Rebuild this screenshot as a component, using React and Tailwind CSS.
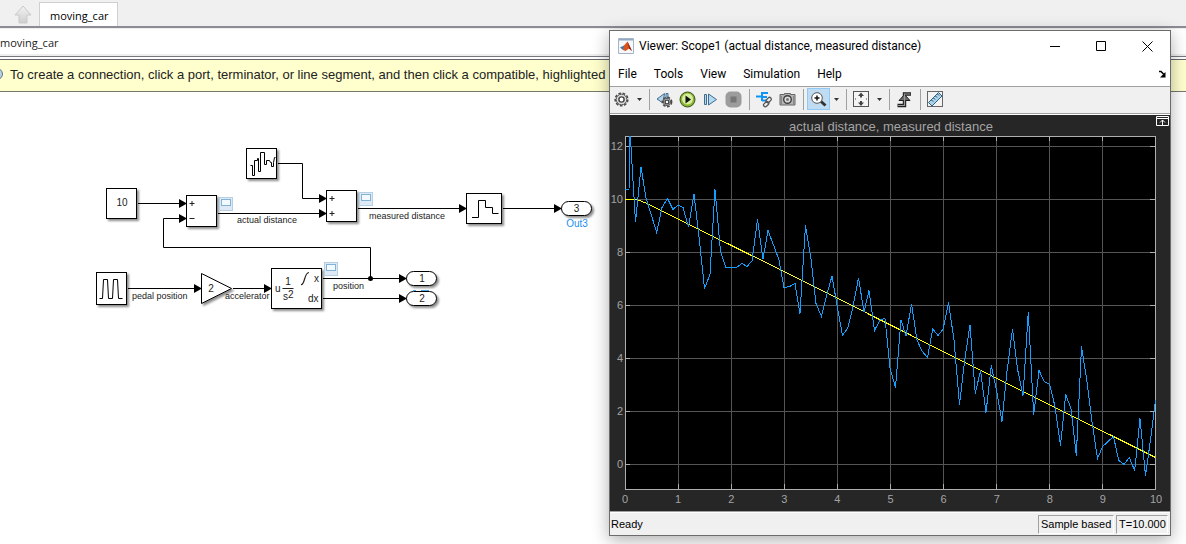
import React from "react";

const UI = "font-['Open_Sans','Noto_Sans',sans-serif]";
const WINDOW = "font-[Roboto,'Open_Sans',sans-serif]";
const ARIAL = "font-['Liberation_Sans',Arial,sans-serif]";

const noise = [
  [625, 189], [629, 189], [630, 130], [635.5, 222], [641, 167], [646, 198], [651, 214], [656.7, 232.5], [662, 207.5],
  [667.5, 198.5], [673, 209.5], [678, 205], [683, 207.5], [688.5, 227], [694, 194], [699, 236.5], [704.5, 288.5],
  [710, 274.5], [715, 189.5], [720.5, 251.5], [726, 268], [731, 267.5], [736.5, 267.5], [742, 263.5], [747, 266.5],
  [752, 261], [757.5, 219.5], [763, 259], [768, 230.5], [773.5, 245], [779, 260], [784, 287.5], [789.5, 286.5],
  [795, 283.5], [800, 313.5], [805.5, 225.5], [811, 259], [816, 303.5], [821.5, 316.5], [826.7, 295], [832, 276],
  [837, 305], [842.5, 335.5], [848, 327.5], [853, 306.5], [858.5, 278], [864, 312], [869, 290.5], [874.5, 330.5],
  [880, 320], [885, 318.5], [890, 368], [895.5, 387.5], [901, 320], [906, 336], [911.5, 304], [917, 340], [922, 351],
  [927.5, 357.5], [932.7, 329], [938, 335.5], [943, 329.5], [948.5, 302.5], [954, 340], [959.5, 404.5], [964.7, 360],
  [970, 325], [975.3, 393.5], [980.5, 370.5], [986, 412.5], [991.3, 365.5], [996.7, 391.5], [1002, 421.5],
  [1007, 371.5], [1012.5, 329], [1017.7, 370], [1023, 395.5], [1028.3, 312], [1033.7, 414.5], [1039, 370.5],
  [1044.3, 381.5], [1049.7, 384.5], [1055, 406.5], [1060.5, 445.5], [1065.7, 394.5], [1071, 408.5], [1076.3, 455.5],
  [1081.5, 346.5], [1087, 381.5], [1092, 421.5], [1097.5, 458.5], [1102.7, 446.5], [1108, 441.5], [1113.5, 436.5],
  [1118.7, 460.5], [1124, 464.5], [1129.3, 457.5], [1134.7, 470.5], [1140, 418.5], [1145.5, 475.5], [1150.5, 440],
  [1155.5, 400],
];
const distance = "625,199.5 635,199.5 641,201 648,204 678,219 799,279 980,370 1155.5,457.5";

function ScopeBadge({ x, y }) {
  return (
    <g>
      <rect x={x + 0.5} y={y + 0.5} width="13" height="13" fill="#dde9f4" stroke="#b6cfe2" />
      <rect x={x + 2.5} y={y + 2.5} width="9" height="6" fill="#f2f9ff" stroke="#82b2d6" />
    </g>
  );
}

function Box({ x, y, w, h, rx = 0 }) {
  return <rect x={x} y={y} width={w} height={h} rx={rx} fill="#fff" stroke="#000" filter="url(#blockShadow)" />;
}

function Arrow({ x, y }) {
  return <path d={`M${x} ${y}l-8-4.500v9z`} fill="#000" />;
}

function Model() {
  return (
    <svg className={`block h-[452px] w-[609px] ${ARIAL}`} viewBox="0 92 609 452" role="img" aria-label="moving_car model">
      <defs>
        <filter id="blockShadow" x="-20%" y="-30%" width="150%" height="170%">
          <feDropShadow dx="2" dy="2" stdDeviation="1.2" floodColor="#000" floodOpacity="0.45" />
        </filter>
      </defs>
      <Box x={106.5} y={188.5} w={30} h={30} />
      <Box x={186.5} y={195.5} w={30} h={31} />
      <Box x={246.5} y={148.5} w={30} h={30} />
      <Box x={326.5} y={190.5} w={30} h={31} />
      <Box x={466.5} y={193.5} w={35} h={30} />
      <Box x={561.5} y={201.5} w={30} h={14} rx={7} />
      <Box x={96.5} y={272.5} w={30} h={32} />
      <Box x={271.5} y={268.5} w={50} h={40} />
      <Box x={406.5} y={271.5} w={30} h={14} rx={7} />
      <Box x={406.5} y={291.5} w={30} h={14} rx={7} />
      <path d="M201.5 273.5L231.5 288.5L201.5 303.5z" fill="#fff" stroke="#000" filter="url(#blockShadow)" />
      <g fill="none" stroke="#000">
        <path d="M138 203.5H180M218 213.5H320M278 163.5H302.5V198.5H320M358 208.5H460M503 208.5H555" />
        <path d="M180 218.5H163.5V247.5H370.5V278.5M128 288.5H195M233 288.5H265M323 278.5H400M323 298.5H400" />
        <path d="M250.5 165.5h2v10h2v-15h3v-2h1v13h2v-19h4v12h2v-4h3l1 2h1v4h2v-4l1-5h1" />
        <path d="M472 217.5h6.5v-17h7v7h7v6h6" />
        <path d="M99.5 298.5h3l1-19h4l1 19h4l1-19h4l1 19h4" />
      </g>
      <Arrow x={187} y={203.5} />
      <Arrow x={187} y={218.5} />
      <Arrow x={327} y={198.5} />
      <Arrow x={327} y={213.5} />
      <Arrow x={467} y={208.5} />
      <Arrow x={562} y={208.5} />
      <Arrow x={202} y={288.5} />
      <Arrow x={272} y={288.5} />
      <Arrow x={407} y={278.5} />
      <Arrow x={407} y={298.5} />
      <circle cx="370.5" cy="278.5" r="2.5" />
      <ScopeBadge x={219} y={197} />
      <ScopeBadge x={359} y={192} />
      <ScopeBadge x={324} y={262} />
      <path d="M189.5 203.5h5M192 201v5M189.5 218.5h5M329.5 198.5h5M332 196v5M329.5 213.5h5M332 211v5M282.5 288.5h11" stroke="#222" />
      <path d="M301 284.5c4 1 3-12 8-12" stroke="#222" fill="none" strokeWidth="1.2" />
      <path d="M413 290.5h3M421 290.5h8" stroke="#4aa8f0" />
      <g className="text-[10px]" fill="#222">
        <text x="122" y="206" textAnchor="middle">10</text>
        <text x="576.5" y="212" textAnchor="middle">3</text>
        <text x="211" y="292" textAnchor="middle">2</text>
        <text x="422" y="282" textAnchor="middle">1</text>
        <text x="422" y="302" textAnchor="middle">2</text>
        <text x="275" y="292">u</text>
        <text x="288" y="285" textAnchor="middle">1</text>
        <text x="283" y="300">s</text>
        <text x="288" y="298">2</text>
        <text x="314" y="282">x</text>
        <text x="308" y="302">dx</text>
        <text x="577" y="227" textAnchor="middle" fill="#1e90f0">Out3</text>
      </g>
      <g className="text-[9px]" fill="#222">
        <text x="237" y="223">actual distance</text>
        <text x="369" y="219">measured distance</text>
        <text x="132" y="299">pedal position</text>
        <text x="225" y="299">accelerator</text>
        <text x="333" y="289">position</text>
      </g>
    </svg>
  );
}

const xTicks = [0, 1, 2, 3, 4, 5, 6, 7, 8, 9, 10];
const yTicks = [0, 2, 4, 6, 8, 10, 12];

function Plot() {
  return (
    <svg className={`block w-full bg-[#262626] ${ARIAL}`} viewBox="610 115 560 396" role="img" aria-label="Scope plot">
      <defs>
        <clipPath id="axes"><rect x="625" y="136" width="531" height="354" /></clipPath>
      </defs>
      <rect x="625" y="136" width="531" height="354" fill="#000" />
      <g shapeRendering="crispEdges">
        {xTicks.slice(1, -1).map((t) => (
          <g key={t}>
            <path d={`M${625.5 + t * 53} 136V489`} stroke="#555" />
            <path d={`M${625.5 + t * 53} 136v5M${625.5 + t * 53} 489v-5`} stroke="#afafaf" />
          </g>
        ))}
        {yTicks.map((t) => {
          const y = 464.5 - Math.round(t * 26.5);
          return (
            <g key={t}>
              <path d={`M625 ${y}H1155`} stroke="#555" />
              <path d={`M625 ${y}h5M1155 ${y}h-5`} stroke="#afafaf" />
            </g>
          );
        })}
        <rect x="625.5" y="136.5" width="530" height="353" fill="none" stroke="#afafaf" />
      </g>
      <g clipPath="url(#axes)" fill="none" shapeRendering="crispEdges">
        <polyline points={distance} stroke="#ffff11" />
        <polyline points={noise.map((p) => p.join(",")).join(" ")} stroke="#139fff" />
      </g>
      <g className="text-[11px]" fill="#a4a4a4">
        {xTicks.map((t) => (
          <text key={t} x={625 + t * 53.1} y="503" textAnchor="middle">{t}</text>
        ))}
        {yTicks.map((t) => (
          <text key={t} x="623" y={468 - Math.round(t * 26.5)} textAnchor="end">{t}</text>
        ))}
      </g>
      <text className="text-[13px]" x="891" y="131" textAnchor="middle" fill="#a4a4a4">actual distance, measured distance</text>
      <path d="M1156.5 116.5h12v9h-12zM1156.5 118.5h12M1162.5 125v-5M1160 122.5l2.5-2.5l2.5 2.5" fill="none" stroke="#fff" />
    </svg>
  );
}

function Icon({ children }) {
  return <svg className="size-[17px]" viewBox="0 0 17 17" fill="none" aria-hidden="true">{children}</svg>;
}

function Gear({ cx, cy, r }) {
  return (
    <g>
      <circle cx={cx} cy={cy} r={r} stroke="#4a4a4a" strokeWidth="1.600" strokeDasharray="2.700 1.600" />
      <circle cx={cx} cy={cy} r={r - 1} fill="#dcdcdc" stroke="#555" />
      <circle cx={cx} cy={cy} r={r / 2.4} fill="#fff" stroke="#444" strokeWidth="1.400" />
    </g>
  );
}

function Tool({ label, active, children }) {
  return (
    <button aria-label={label} className={`flex h-[22px] w-[23px] items-center justify-center ${active ? "border border-[#90c8f6] bg-[#c0dcf3]" : ""}`}>
      <Icon>{children}</Icon>
    </button>
  );
}

function Caret({ label }) {
  return (
    <button aria-label={label} className="flex h-[22px] w-3 items-center justify-center">
      <svg width="5" height="3" viewBox="0 0 5 3" aria-hidden="true"><path d="M0 0h5L2.5 3z" fill="#333" /></svg>
    </button>
  );
}

function Sep() {
  return <span className="mr-[3px] ml-1 h-[21px] w-px bg-[#a0a0a0]" />;
}

function Toolbar() {
  return (
    <div className="flex h-7 items-center border-y border-[#a0a0a0] bg-[#f0f0f0] pb-0.5" role="toolbar">
      <Tool label="Configuration properties"><Gear cx={8.5} cy={8.5} r={6.3} /></Tool>
      <Caret label="Configuration options" />
      <Sep />
      <Tool label="Step back options">
        <path d="M8.5 2.5L1 8L7 12zM10 2.500h2v6h-2z" fill="#b5d4ea" stroke="#3e6c8f" />
        <Gear cx={11} cy={11} r={4.600} />
      </Tool>
      <Tool label="Run">
        <circle cx="8.500" cy="8.500" r="7.500" fill="#86b52c" stroke="#3f4f22" />
        <circle cx="8.500" cy="8" r="5.500" fill="#d9efa0" />
        <path d="M6.500 4.500v8l5.500-4z" fill="#111" />
      </Tool>
      <Tool label="Step forward">
        <path d="M2.500 3.500h2v10h-2zM6.500 3v11L14.500 8.500z" fill="#b5d9f0" stroke="#3e6c8f" />
      </Tool>
      <Tool label="Stop">
        <rect x="0.500" y="0.500" width="16" height="16" rx="5" fill="#9c9c9c" />
        <rect x="5.500" y="5.500" width="6" height="6" fill="#767676" />
      </Tool>
      <Sep />
      <Tool label="Highlight block">
        <path d="M0 5.500h6M6 1v9M6 2h6M6 6h5M6 9.500h4" stroke="#0d94f5" strokeWidth="2" />
        <rect x="11" y="8" width="6" height="3.500" rx="1.700" transform="rotate(-45 12.500 11)" stroke="#555" strokeWidth="1.300" />
        <rect x="7" y="11.500" width="6" height="3.500" rx="1.700" transform="rotate(-45 10 13)" stroke="#555" strokeWidth="1.300" />
      </Tool>
      <Tool label="Snapshot">
        <path d="M1 3.500h4.500V2.500h6v1h4.500v10.500H1z" fill="#b5b5b5" stroke="#666" />
        <path d="M2.500 5v8M14.500 5v8" stroke="#888" />
        <circle cx="8.500" cy="8.500" r="3.800" fill="#dcdcdc" stroke="#3d3d3d" strokeWidth="1.400" />
        <circle cx="8.500" cy="8.500" r="1.500" fill="#777" />
      </Tool>
      <Sep />
      <Tool label="Zoom" active>
        <path d="M11 10.500l4.500 4" stroke="#333" strokeWidth="3" />
        <circle cx="7" cy="7" r="5.300" fill="#fff" stroke="#555" />
        <path d="M7 4.500v5M4.500 7h5" stroke="#111" strokeWidth="1.500" />
      </Tool>
      <Caret label="Zoom options" />
      <Sep />
      <Tool label="Scale axes">
        <rect x="0.500" y="0.500" width="15" height="15" fill="#f4f4f4" stroke="#555" />
        <path d="M8 1.500L5 5h6zM8 15l-3-3.500h6zM7 5h2v1.500H7zM7 10h2v1.500H7zM2 7.500h1v1H2zM13 7.500h1v1h-1z" fill="#444" />
      </Tool>
      <Caret label="Scale options" />
      <Sep />
      <Tool label="Triggers">
        <path d="M1.500 14.500h7V3H15" stroke="#1f1f1f" strokeWidth="3.400" />
        <path d="M8.500 3.500L3 9.500h11z" fill="#666" stroke="#1f1f1f" />
        <path d="M2 14.500h6.500V3H14.500" stroke="#999" strokeWidth="1.200" />
      </Tool>
      <Sep />
      <Tool label="Measurements">
        <rect x="0.500" y="0.500" width="15" height="15" fill="#f3f3f3" stroke="#666" />
        <path d="M1.500 11.500L11.500 1.500l3.500 3.500L5 15z" fill="#a8d4ec" stroke="#335e7c" />
        <path d="M4.500 9l1.500 1.500M6.500 7L8 8.500M8.500 5L10 6.500M10.500 3L12 4.500" stroke="#1e4258" />
      </Tool>
    </div>
  );
}

function ScopeWindow() {
  return (
    <section
      aria-label="Viewer: Scope1"
      className={`absolute top-[30px] right-[15px] left-[609px] flex flex-col border border-[#6b6b6b] bg-white text-black shadow-[0_4px_16px_rgba(0,0,0,0.32)] ${WINDOW}`}
    >
      <header className="flex h-[30px] items-center pl-2">
        <svg width="16" height="16" viewBox="0 0 16 16" aria-hidden="true">
          <path d="M0.500 0.500h15v15h-15z" fill="#f4f8fc" stroke="#a6b4c4" />
          <path d="M1 1h14v1.500H1z" fill="#8fa9c7" />
          <path d="M2 9.500l4-2l2 2l-3 2.500z" fill="#3d78a8" />
          <path d="M6 7.500l3.500-4L14 13l-3-2.500L7.500 13L5 12z" fill="#d9531e" />
          <path d="M9.500 3.500L14 13l-3-2.500z" fill="#8e2414" />
        </svg>
        <h1 className="ml-[5px] flex-1 text-[12px] whitespace-nowrap">Viewer: Scope1 (actual distance, measured distance)</h1>
        <button aria-label="Minimize" className="flex h-full w-[46px] items-center justify-center">
          <svg width="11" height="11" viewBox="0 0 11 11"><path d="M0 5.500h10" stroke="#000" /></svg>
        </button>
        <button aria-label="Maximize" className="flex h-full w-[46px] items-center justify-center">
          <svg width="11" height="11" viewBox="0 0 11 11"><path d="M0.500 0.500h9v9h-9z" fill="none" stroke="#000" /></svg>
        </button>
        <button aria-label="Close" className="flex h-full w-[46px] items-center justify-center">
          <svg width="11" height="11" viewBox="0 0 11 11"><path d="M0.500 0.500l10 10M10.500 0.500l-10 10" stroke="#000" /></svg>
        </button>
      </header>
      <nav className="flex h-[25px] items-center gap-[17px] pr-1 pl-2 text-[12px]">
        <button>File</button>
        <button>Tools</button>
        <button>View</button>
        <button>Simulation</button>
        <button>Help</button>
        <button aria-label="Dock" className="ml-auto">
          <svg width="8" height="8" viewBox="0 0 8 8"><path d="M1 1.500h2l3 3" fill="none" stroke="#000" strokeWidth="1.500" /><path d="M7.500 2v5.500H2z" fill="#000" /></svg>
        </button>
      </nav>
      <Toolbar />
      <div className="border-t border-white">
        <Plot />
      </div>
      <footer className={`flex h-6 items-center gap-0.5 border-t border-[#a0a0a0] bg-[#f0f0f0] pr-0.5 text-[11px] shadow-[inset_0_1px_0_#fff] ${ARIAL}`}>
        <span className="mt-px flex h-[19px] flex-1 items-center pl-px">Ready</span>
        <span className="mt-px flex h-[19px] w-[76px] items-center border border-t-[#a0a0a0] border-r-white border-b-white border-l-[#a0a0a0] pl-0.5 whitespace-nowrap">Sample based</span>
        <span className="mt-px flex h-[19px] w-[52px] items-center border border-t-[#a0a0a0] border-r-white border-b-white border-l-[#a0a0a0] pl-0.5">T=10.000</span>
      </footer>
    </section>
  );
}

export default function App() {
  return (
    <div className={`relative min-h-screen overflow-hidden bg-white text-[#222] ${UI}`}>
      <div className="flex h-7 items-end border-b-2 border-[#8c8c94] bg-[#f0f0f0]">
        <button aria-label="Up to parent" className="mb-0.5 ml-3.5">
          <svg className="block" width="18" height="19" viewBox="0 0 18 19">
            <defs>
              <linearGradient id="up" x1="0" y1="0" x2="0" y2="1"><stop stopColor="#f2f2f2" /><stop offset="1" stopColor="#cfcfcf" /></linearGradient>
            </defs>
            <path d="M9 1l8 9h-4v8H5v-8H1z" fill="url(#up)" stroke="#c9c9c9" />
          </svg>
        </button>
        <button className="ml-[7px] flex h-6 items-center border border-b-0 border-[#cfcfcf] bg-white pt-1 pr-2 pl-2.5 text-[11px] text-black">moving_car</button>
      </div>
      <div className="h-[29px] border-b border-[#77777f] pt-0.5 shadow-[inset_0_1px_0_#eee,inset_0_-2px_0_#eee]">
        <a href="#model" className="flex h-[26px] items-center text-[11px]">moving_car</a>
      </div>
      <div className={`mt-0.5 flex h-[33px] items-center overflow-hidden border-t border-b border-t-[#66666e] border-b-[#77776a] bg-[#ffffce] pb-0.5 text-[13px] whitespace-nowrap text-[#222] ${ARIAL}`}>
        <svg className="shrink-0" width="10" height="14" viewBox="0 0 10 14" aria-hidden="true">
          <circle cx="-3" cy="6" r="5.500" fill="#b8cfe6" stroke="#66788c" />
        </svg>
        <p>To create a connection, click a port, terminator, or line segment, and then click a compatible, highlighted r</p>
      </div>
      <main id="model">
        <Model />
      </main>
      <ScopeWindow />
    </div>
  );
}
